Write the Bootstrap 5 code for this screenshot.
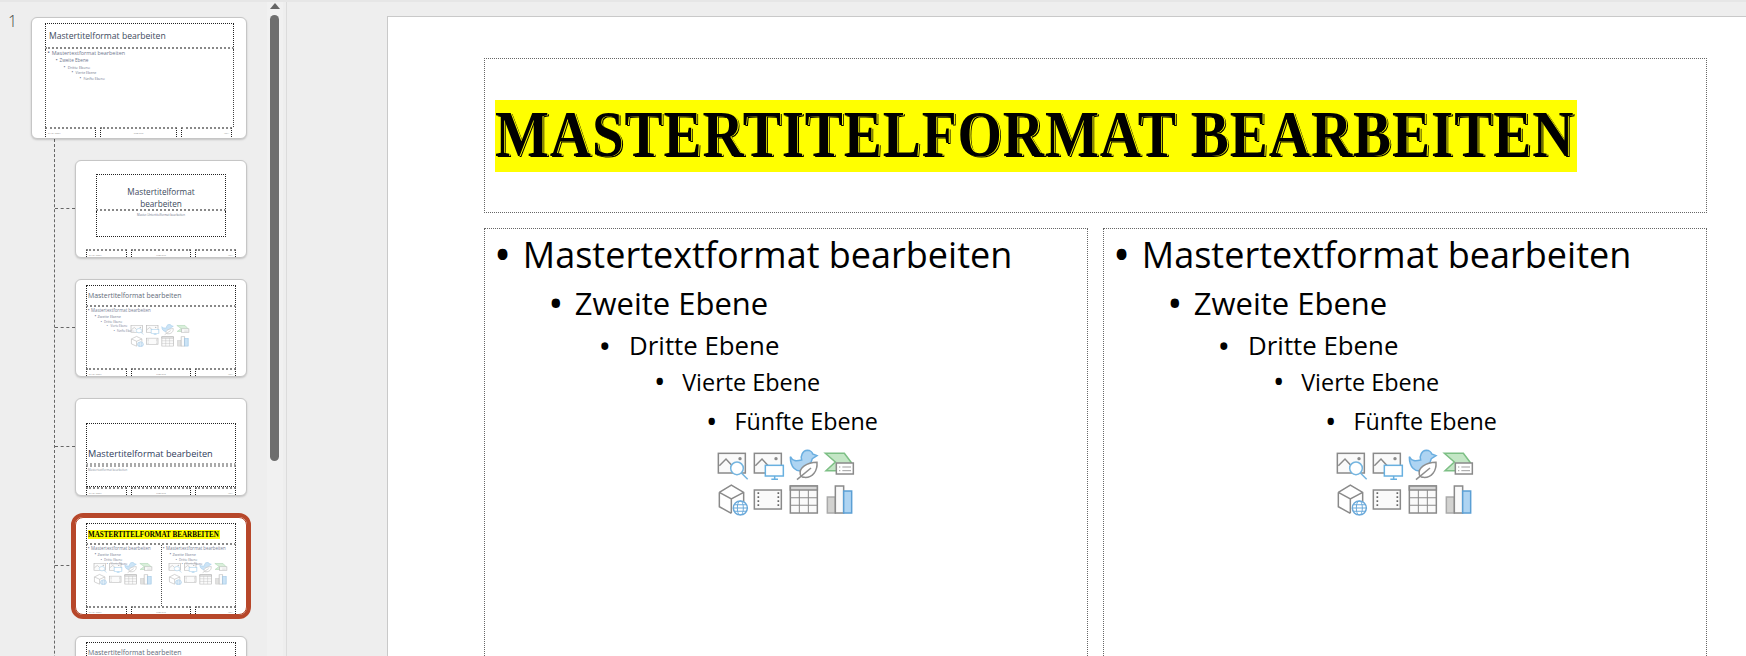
<!DOCTYPE html>
<html lang="de">
<head>
<meta charset="utf-8">
<title>Folienmaster</title>
<link href="https://cdn.jsdelivr.net/npm/bootstrap@5.3.0/dist/css/bootstrap.min.css" rel="stylesheet">
<style>
html,body{height:100%;margin:0;overflow:hidden;background:#eee;font-family:"Open Sans","Noto Sans",sans-serif;color:#000}
.app{height:656px;overflow:hidden;border-top:2px solid #e6e6e6}
.side{width:287px;flex:none;position:relative;background:#eee;border-right:1px solid #dcdcdc;overflow:hidden;height:654px}
.nr{position:absolute;left:8px;top:9px;font-size:16px;font-weight:300;line-height:20px;color:#444}
.scrollt{position:absolute;left:267px;top:0;width:16px;height:100%;background:#f1f1f1}
.arrow{position:absolute;left:3px;top:1px;width:0;height:0;border-left:5px solid transparent;border-right:5px solid transparent;border-bottom:6px solid #666}
.grip{position:absolute;left:3px;top:13px;width:9px;height:446px;border-radius:5px;background:#6e6e6e}
.tree{padding:15px 0 0 31px;width:250px}
.thumb{background:#fff;border:1px solid #c6c6c6;border-radius:6px;box-shadow:0 1px 2px rgba(0,0,0,.18);overflow:hidden;width:172px;height:98px;position:relative;display:flex;flex-direction:column}
.master{width:216px;height:122px;padding:5px 12px 0 13px}
.kids{margin-left:23px;border-left:1px dashed #666;padding:21px 0 30px 20px;display:flex;flex-direction:column;gap:21px}
.rw{position:relative}
.rw::before{content:"";position:absolute;left:-20px;top:48px;width:20px;border-top:1px dashed #666}
.pad{padding:5px 10px 0 10px}
.sel{outline:4px solid #b7472a;border-color:#b7472a;border-radius:8px}
.ph{border:1px dotted #222}
.t1,.t3,.t2{border-bottom:2px dotted #888}
.bdy,.s2{border-top:0}
.t1{height:26px;font-size:8.6px;color:#3c4a5c;line-height:24px;padding-left:3px;white-space:nowrap}
.t3{height:22px;font-size:6.9px;color:#5f6b78;line-height:20px;padding-left:1px;white-space:nowrap}
.in2{padding:8px 10px 0 10px}
.t2{height:37px;font-size:8.2px;line-height:12px;color:#3c4a5c;padding-top:11px}
.s2{height:26px;font-size:2.9px;line-height:8px;color:#6a7388}
.t4{height:42px;font-size:9.2px;line-height:12px;color:#2f3c5c;padding:24px 0 0 1px;white-space:nowrap;border-bottom:2px dotted #aaa}
.s4{height:22px;border-top:2px dotted #aaa;font-size:2.9px;line-height:6px;color:#8b93a3;padding-left:1px}
.bdy{overflow:hidden;border-bottom:0}
.foot{display:flex;gap:4px;flex:none;height:12px;margin-bottom:-4px}
.master .foot{margin-bottom:-1px}
.foot .ph{font-size:2.5px;line-height:8px;color:#888;padding:0 2px;overflow:hidden;white-space:nowrap;border-top:2px dotted #888}
.f1{flex:0 0 41px}.f2{flex:0 0 60px;text-align:center}.f3{flex:0 0 41px;text-align:right}
.master .f1{flex:0 0 51px}.master .f2{flex:0 0 77px}.master .f3{flex:0 0 51px}
.lst{list-style:none;margin:0;padding:0;color:#000}
.lst li{display:flex;white-space:nowrap}
.dot{flex:none;transform:translateX(-.1em) scale(1.3);transform-origin:10% 50%}
.mini{color:#55607a;padding-top:.1em}
.l1{font-size:1em;line-height:1.33em}
.l2{font-size:.861em;line-height:1.585em}
.l3{font-size:.717em;line-height:1.32em}
.l4{font-size:.65em;line-height:1.78em}
.l5{font-size:.647em;line-height:1.47em}
.l1 .dot{width:.69em}
.l2{padding-left:1.74em}.l2 .dot{width:.74em}
.l3{padding-left:4.03em}.l3 .dot{width:1.05em}
.l4{padding-left:6.8em}.l4 .dot{width:1.07em}
.l5{padding-left:9.05em}.l5 .dot{width:1.1em}
.m1{font-size:5.4px;padding-left:2px;opacity:.85}
.m3{font-size:4.4px;padding-left:1px;opacity:.8}
.grid3{position:absolute;opacity:.62;width:60px;height:23px;top:44px}
.g-a{left:54px}
.g-b{left:17px}
.g-c{left:92px}
.mainp{flex:1 1 auto;min-width:0;padding:14px 0 0 100px;overflow:hidden;background:#eee}
.slide{width:1400px;height:800px;background:#fff;border:1px solid #c9c9c9;padding:41px 0 0 96px}
.ttl{width:1223px;height:155px;border:1px dotted #666;display:flex;align-items:center;padding-left:10px}
.alg{display:block;background:#ff0;height:72px;width:1082px}
.alg2{display:inline-block;font-family:"Liberation Serif",serif;font-weight:700;font-size:65px;line-height:68px;letter-spacing:1px;white-space:nowrap;color:#000;text-shadow:1px 0 0 #ff0,2px 1px 0 #000;transform:scaleX(.879);transform-origin:0 50%}
.yel{background:#ff0;width:132px;height:9px;margin-top:6px;line-height:9px}
.yel2{display:inline-block;font:700 7.8px/9px "Liberation Serif",serif;white-space:nowrap;color:#000;transform:scaleX(.91);transform-origin:0 50%}
.cols{display:flex;gap:15px;margin-top:15px;width:1223px}
.box{width:604px;height:520px;border:1px dotted #666;padding:2px 0 0 13px;position:relative}
.big{font-size:36px;font-family:"Open Sans",sans-serif}
.ic{display:block;width:140px;height:66.7px;margin:0 0 0 218px}
.iw{margin-top:11px}
</style>
</head>
<body>
<svg width="0" height="0" class="position-absolute">
<defs>
<symbol id="igrid" viewBox="45 55 420 200" preserveAspectRatio="none">
<g fill="#fafafa" stroke="#8a8a8a" stroke-width="4.5">
<rect x="52" y="68" width="81" height="59"/>
<polyline fill="none" points="55,105 75,85 95,107"/>
<circle cx="117" cy="84" r="5" fill="#8a8a8a" stroke="none"/>
<circle cx="108" cy="113" r="19" fill="#fff" stroke="#74b5e0"/>
<line x1="122" y1="128" x2="140" y2="146" stroke="#74b5e0"/>
<rect x="160" y="68" width="81" height="59"/>
<polyline fill="none" points="163,105 183,85 203,107"/>
<circle cx="225" cy="84" r="5" fill="#8a8a8a" stroke="none"/>
<rect x="193" y="104" width="54" height="32" fill="#fff" stroke="#68b0e0"/>
<path d="M221 136v9M211 146h20" fill="none" stroke="#68b0e0"/>
<path d="M268 78C275 92 285 92 302 88C298 75 305 60 319 59C328 59 334 65 335 70L348 75L334 84C330 100 322 112 305 120C285 124 268 110 268 78Z" fill="#aed4f2" stroke="#6aaee0"/>
<path d="M298 132C293 110 318 96 348 95C350 120 335 142 310 140C304 140 300 137 298 132Z" fill="#fff" stroke="#8e8e8e"/>
<path d="M288 147L330 112" fill="none" stroke="#8e8e8e"/>
<path d="M373 68H430L452 97L430 120H375L403 94Z" fill="#c3e6c5" stroke="#7dbf85"/>
<rect x="406" y="97" width="51" height="33" fill="#fff"/>
<path d="M414 109h4M424 109h26M414 120h4M424 120h26" stroke-width="2.5"/>
<path d="M55 185L91 163L128 185V215M55 185V228L91 248M55 185L91 205L128 185M91 205V248" fill="none"/>
<g stroke="#6aa9da"><circle cx="118" cy="232" r="21" fill="#fff"/><ellipse cx="118" cy="232" rx="9" ry="21" fill="none" stroke-width="3"/><path d="M97 232h42M100 222h36M100 242h36" stroke-width="3"/></g>
<rect x="160" y="178" width="81" height="57"/>
<path d="M172 185v5M172 197v5M172 209v5M172 221v5M232 185v5M232 197v5M232 209v5M232 221v5" stroke="#666" stroke-width="5"/>
<rect x="268" y="166" width="81" height="81"/>
<rect x="268" y="166" width="81" height="12" fill="#d5d5d5"/>
<path d="M268 201h81M268 224h81M295 178v69M322 178v69" fill="none" stroke-width="3"/>
<rect x="379" y="199" width="24" height="48" fill="#d2d2d0" stroke="#aaa"/>
<rect x="403" y="166" width="25" height="81"/>
<rect x="428" y="181" width="24" height="66" fill="#aed4f2" stroke="#5b9fd4"/>
</g>
</symbol>
</defs>
</svg>
<div class="app d-flex">
  <aside class="side">
    <div class="nr">1</div>
    <div class="scrollt"><div class="arrow"></div><div class="grip"></div></div>
    <div class="tree">
      <div class="thumb master">
        <div class="ph t1">Mastertitelformat bearbeiten</div>
        <div class="ph bdy flex-grow-1 m1 mini">
          <ul class="lst mini"><li class="l1"><span class="dot">•</span>Mastertextformat bearbeiten</li><li class="l2"><span class="dot">•</span>Zweite Ebene</li><li class="l3"><span class="dot">•</span>Dritte Ebene</li><li class="l4"><span class="dot">•</span>Vierte Ebene</li><li class="l5"><span class="dot">•</span>Fünfte Ebene</li></ul>
        </div>
        <div class="foot"><div class="ph f1">01.01.2024</div><div class="ph f2">Fußzeile</div><div class="ph f3">‹Nr.›</div></div>
      </div>
      <div class="kids">
        <div class="rw"><div class="thumb pad">
          <div class="d-flex flex-column in2">
            <div class="ph t2 text-center">Mastertitelformat<br>bearbeiten</div>
            <div class="ph s2 text-center">Master-Untertitelformat bearbeiten</div>
          </div>
          <div class="foot mt-auto"><div class="ph f1">01.01.2024</div><div class="ph f2">Fußzeile</div><div class="ph f3">‹Nr.›</div></div>
        </div></div>
        <div class="rw"><div class="thumb pad">
          <div class="ph t3">Mastertitelformat bearbeiten</div>
          <div class="ph bdy m3 mini flex-grow-1"><ul class="lst mini"><li class="l1"><span class="dot">•</span>Mastertextformat bearbeiten</li><li class="l2"><span class="dot">•</span>Zweite Ebene</li><li class="l3"><span class="dot">•</span>Dritte Ebene</li><li class="l4"><span class="dot">•</span>Vierte Ebene</li><li class="l5"><span class="dot">•</span>Fünfte Ebene</li></ul></div>
          <div class="foot"><div class="ph f1">01.01.2024</div><div class="ph f2">Fußzeile</div><div class="ph f3">‹Nr.›</div></div>
          <svg class="grid3 g-a"><use href="#igrid"/></svg>
        </div></div>
        <div class="rw"><div class="thumb pad pt-4">
          <div class="ph t4">Mastertitelformat bearbeiten</div>
          <div class="ph s4">Mastertextformat bearbeiten</div>
          <div class="foot mt-auto"><div class="ph f1">01.01.2024</div><div class="ph f2">Fußzeile</div><div class="ph f3">‹Nr.›</div></div>
        </div></div>
        <div class="rw"><div class="thumb pad sel">
          <div class="ph t3"><div class="yel"><span class="yel2">MASTERTITELFORMAT BEARBEITEN</span></div></div>
          <div class="d-flex flex-grow-1">
            <div class="ph bdy m3 mini w-50 border-end-0"><ul class="lst mini"><li class="l1"><span class="dot">•</span>Mastertextformat bearbeiten</li><li class="l2"><span class="dot">•</span>Zweite Ebene</li><li class="l3"><span class="dot">•</span>Dritte Ebene</li><li class="l4"><span class="dot">•</span>Vierte Ebene</li></ul></div>
            <div class="ph bdy m3 mini w-50"><ul class="lst mini"><li class="l1"><span class="dot">•</span>Mastertextformat bearbeiten</li><li class="l2"><span class="dot">•</span>Zweite Ebene</li><li class="l3"><span class="dot">•</span>Dritte Ebene</li><li class="l4"><span class="dot">•</span>Vierte Ebene</li></ul></div>
          </div>
          <div class="foot"><div class="ph f1">01.01.2024</div><div class="ph f2">Fußzeile</div><div class="ph f3">‹Nr.›</div></div>
          <svg class="grid3 g-b"><use href="#igrid"/></svg>
          <svg class="grid3 g-c"><use href="#igrid"/></svg>
        </div></div>
        <div class="rw"><div class="thumb pad">
          <div class="ph t3">Mastertitelformat bearbeiten</div>
          <div class="ph bdy m3 mini flex-grow-1"></div>
        </div></div>
      </div>
    </div>
  </aside>
  <main class="mainp">
    <section class="slide">
      <div class="ttl"><span class="alg"><span class="alg2">MASTERTITELFORMAT BEARBEITEN</span></span></div>
      <div class="cols">
        <div class="box big">
          <ul class="lst"><li class="l1"><span class="dot">•</span>Mastertextformat bearbeiten</li><li class="l2"><span class="dot">•</span>Zweite Ebene</li><li class="l3"><span class="dot">•</span>Dritte Ebene</li><li class="l4"><span class="dot">•</span>Vierte Ebene</li><li class="l5"><span class="dot">•</span>Fünfte Ebene</li></ul>
          <div class="iw"><svg class="ic"><use href="#igrid"/></svg></div>
        </div>
        <div class="box big">
          <ul class="lst"><li class="l1"><span class="dot">•</span>Mastertextformat bearbeiten</li><li class="l2"><span class="dot">•</span>Zweite Ebene</li><li class="l3"><span class="dot">•</span>Dritte Ebene</li><li class="l4"><span class="dot">•</span>Vierte Ebene</li><li class="l5"><span class="dot">•</span>Fünfte Ebene</li></ul>
          <div class="iw"><svg class="ic"><use href="#igrid"/></svg></div>
        </div>
      </div>
    </section>
  </main>
</div>
<script src="https://cdn.jsdelivr.net/npm/bootstrap@5.3.0/dist/js/bootstrap.bundle.min.js"></script>
</body>
</html>
